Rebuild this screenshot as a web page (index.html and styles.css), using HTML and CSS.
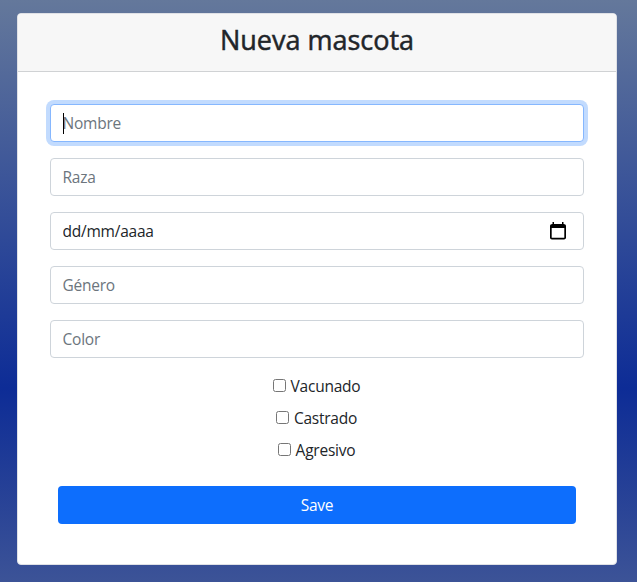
FILE: index.html
```html
<!DOCTYPE html>
<html lang="es">
<head>
<meta charset="utf-8">
<title>Nueva mascota</title>
<link rel="stylesheet" href="styles.css">
</head>
<body>
<main class="card">
  <header class="card-header"><h1 class="title">Nueva mascota</h1></header>
  <form class="card-body">
    <div class="field focused"><input class="control" type="text" placeholder="Nombre"><span class="caret"></span></div>
    <div class="field"><input class="control" type="text" placeholder="Raza"></div>
    <div class="field">
      <input class="control" type="text" value="dd/mm/aaaa">
      <svg class="calendar" viewBox="0 0 16 18"><path fill-rule="evenodd" d="M2.500 0h1.500v2h8V0h1.500v2c1.600 0 2.500.8 2.500 2v11.500c0 1.200-.8 2-2 2H2c-1.200 0-2-.8-2-2V4c0-1.200.9-2 2.500-2zM1.700 6v9.800h12.600V6z"/></svg>
    </div>
    <div class="field"><input class="control" type="text" placeholder="Género"></div>
    <div class="field"><input class="control" type="text" placeholder="Color"></div>
    <div class="checks">
      <label class="check"><input class="box" type="checkbox"><span>Vacunado</span></label>
      <label class="check"><input class="box" type="checkbox"><span>Castrado</span></label>
      <label class="check"><input class="box" type="checkbox"><span>Agresivo</span></label>
    </div>
    <button class="save" type="button">Save</button>
  </form>
</main>
</body>
</html>
```
FILE: styles.css
```css
* { box-sizing: border-box; }
html { height: 100%; }
body {
  margin: 0;
  height: 582px;
  padding: 13px 20px 17px 17px;
  overflow: hidden;
  background: linear-gradient(#64789b 0, #0d2c96 388px, #3c5397 582px);
  color: #212529;
  font: 15.500px/24px "Segoe UI", "Open Sans", "Noto Sans", sans-serif;
  letter-spacing: -0.23px;
}
.card {
  height: 552px;
  background: #fff;
  border: 1px solid #dfe1e6;
  border-radius: 4px;
  overflow: hidden;
}
.card-header {
  height: 58px;
  padding-top: 9px;
  background: #f7f7f7;
  border-bottom: 1px solid #d0d2d4;
}
.title {
  margin: 0;
  font-size: 27px;
  font-weight: 500;
  line-height: 34px;
  letter-spacing: 0;
  text-align: center;
  -webkit-text-stroke: 0.5px #212529;
}
.card-body {
  display: flex;
  flex-direction: column;
  padding: 32px;
}
.field {
  position: relative;
  height: 38px;
  margin-bottom: 16px;
}
.control {
  display: block;
  width: 100%;
  height: 38px;
  padding: 6px 12px 6px 11.500px;
  border: 1px solid #ced4da;
  border-radius: 4px;
  outline: 0;
  background: #fff;
  color: #212529;
  font: inherit;
  letter-spacing: inherit;
}
.control::placeholder { color: #6c757d; opacity: 1; }
.focused .control {
  border-color: #86b7fe;
  box-shadow: 0 0 0 4px #c2dbfe;
}
.caret {
  position: absolute;
  left: 13px;
  top: 9px;
  width: 1px;
  height: 21px;
  background: #000;
}
.calendar {
  position: absolute;
  right: 18px;
  top: 10px;
  width: 16px;
  height: 18px;
}
.checks {
  display: flex;
  flex-direction: column;
  align-items: center;
  gap: 8px;
  padding-right: 1px;
}
.check { display: flex; align-items: center; gap: 5px; height: 24px; }
.box { width: 13px; height: 13px; margin: 0; position: relative; top: -1px; }
.save {
  height: 38px;
  margin: 24px 8px 0;
  padding: 0;
  border: 0;
  border-radius: 4px;
  background: #0d6efd;
  color: #fff;
  font: inherit;
  letter-spacing: inherit;
}
```
